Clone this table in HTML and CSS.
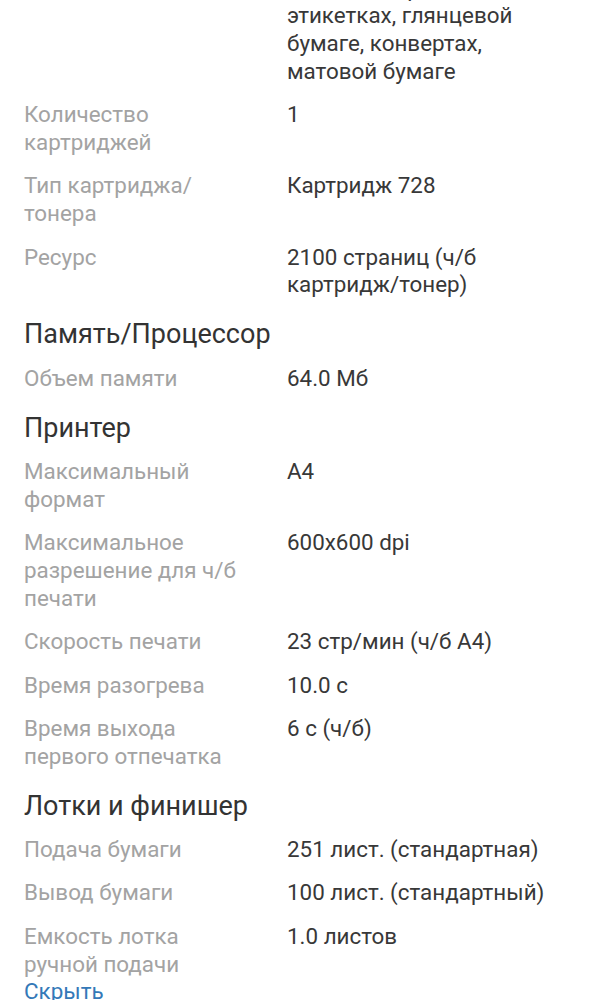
FILE: index.html
```html
<!DOCTYPE html>
<html lang="ru">
<head>
<meta charset="utf-8">
<link rel="stylesheet" href="styles.css">
</head>
<body>
<div class="page">
  <div class="row">
    <div class="label"></div>
    <div class="value">Печать на карточках,<br>пленках, картоне,<br>этикетках, глянцевой<br>бумаге, конвертах,<br>матовой бумаге</div>
  </div>
  <div class="row">
    <div class="label">Количество<br>картриджей</div>
    <div class="value">1</div>
  </div>
  <div class="row">
    <div class="label">Тип картриджа/<br>тонера</div>
    <div class="value">Картридж 728</div>
  </div>
  <div class="row">
    <div class="label">Ресурс</div>
    <div class="value">2100 страниц (ч/б<br>картридж/тонер)</div>
  </div>

  <h2 class="heading">Память/Процессор</h2>
  <div class="row">
    <div class="label">Объем памяти</div>
    <div class="value">64.0 Мб</div>
  </div>

  <h2 class="heading">Принтер</h2>
  <div class="row">
    <div class="label">Максимальный<br>формат</div>
    <div class="value">A4</div>
  </div>
  <div class="row">
    <div class="label">Максимальное<br>разрешение для ч/б<br>печати</div>
    <div class="value">600x600 dpi</div>
  </div>
  <div class="row">
    <div class="label">Скорость печати</div>
    <div class="value">23 стр/мин (ч/б А4)</div>
  </div>
  <div class="row">
    <div class="label">Время разогрева</div>
    <div class="value">10.0 с</div>
  </div>
  <div class="row">
    <div class="label">Время выхода<br>первого отпечатка</div>
    <div class="value">6 с (ч/б)</div>
  </div>

  <h2 class="heading">Лотки и финишер</h2>
  <div class="row">
    <div class="label">Подача бумаги</div>
    <div class="value">251 лист. (стандартная)</div>
  </div>
  <div class="row">
    <div class="label">Вывод бумаги</div>
    <div class="value">100 лист. (стандартный)</div>
  </div>
  <div class="row last">
    <div class="label">Емкость лотка<br>ручной подачи</div>
    <div class="value">1.0 листов</div>
  </div>
  <a class="toggle" href="#">Скрыть</a>
</div>
</body>
</html>
```
FILE: styles.css
```css
html, body {
  margin: 0;
  padding: 0;
  background: #ffffff;
}
body {
  font-family: Roboto, "Noto Sans", sans-serif;
  overflow: hidden;
}
.page {
  display: flex;
  flex-direction: column;
  padding: 0 12px 0 24px;
  margin-top: -53.1px;
}
.row {
  display: grid;
  grid-template-columns: 263px 1fr;
  font-size: 22.4px;
  line-height: 27.7px;
  margin-bottom: 15.8px;
  white-space: nowrap;
}
.row.last {
  margin-bottom: 0;
}
.label {
  color: #a3a3a3;
}
.value {
  color: #383838;
}
.heading {
  margin: 3.6px 0 14.2px 0;
  font-size: 27px;
  line-height: 32px;
  font-weight: 400;
  color: #333333;
}
.toggle {
  font-size: 22.4px;
  line-height: 27.7px;
  color: #3479b8;
  text-decoration: none;
  align-self: flex-start;
}
```
